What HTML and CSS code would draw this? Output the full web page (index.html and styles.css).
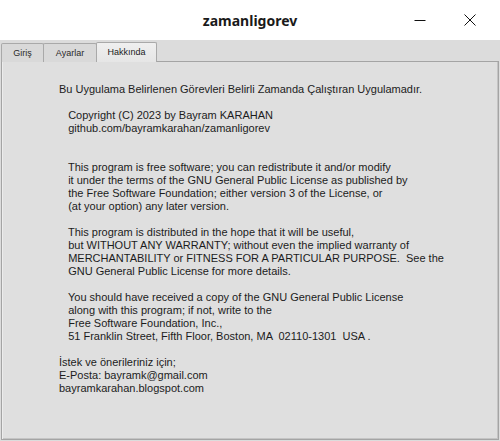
FILE: index.html
```html
<!DOCTYPE html>
<html>
<head>
<meta charset="utf-8">
<link rel="stylesheet" href="styles.css">
</head>
<body>
<div class="window">
  <div class="titlebar">
    <div class="title">zamanligorev</div>
    <div class="controls">
      <svg class="ctl" width="12" height="12" viewBox="0 0 12 12"><line x1="0.5" y1="6.5" x2="11.5" y2="6.5" stroke="#111" stroke-width="1"/></svg>
      <svg class="ctl close" width="12" height="12" viewBox="0 0 12 12"><path d="M0.5 0.5 L11.5 11.5 M11.5 0.5 L0.5 11.5" stroke="#111" stroke-width="1"/></svg>
    </div>
  </div>
  <div class="body">
    <div class="tabs">
      <div class="tab">Giriş</div>
      <div class="tab">Ayarlar</div>
      <div class="tab active">Hakkında</div>
      <div class="tabfill"></div>
    </div>
    <div class="panel">
<div class="text">Bu Uygulama Belirlenen Görevleri Belirli Zamanda Çalıştıran Uygulamadır.

   Copyright (C) 2023 by Bayram KARAHAN
   github.com/bayramkarahan/zamanligorev


   This program is free software; you can redistribute it and/or modify
   it under the terms of the GNU General Public License as published by
   the Free Software Foundation; either version 3 of the License, or
   (at your option) any later version.

   This program is distributed in the hope that it will be useful,
   but WITHOUT ANY WARRANTY; without even the implied warranty of
   MERCHANTABILITY or FITNESS FOR A PARTICULAR PURPOSE.  See the
   GNU General Public License for more details.

   You should have received a copy of the GNU General Public License
   along with this program; if not, write to the
   Free Software Foundation, Inc.,
   51 Franklin Street, Fifth Floor, Boston, MA  02110-1301  USA .

İstek ve önerileriniz için;
E-Posta: bayramk@gmail.com
bayramkarahan.blogspot.com</div>
    </div>
  </div>
</div>
</body>
</html>
```
FILE: styles.css
```css
html, body {
  margin: 0;
  padding: 0;
  background: #ffffff;
}
.window {
  width: 500px;
  height: 441px;
  display: flex;
  flex-direction: column;
  overflow: hidden;
}
.titlebar {
  height: 40px;
  flex: none;
  background: #ffffff;
  position: relative;
  display: flex;
  align-items: center;
  justify-content: center;
}
.title {
  font-family: "Noto Sans", sans-serif;
  font-weight: bold;
  font-size: 14px;
  color: #1a1a1a;
}
.controls {
  position: absolute;
  right: 24px;
  top: 14px;
  display: flex;
  gap: 38px;
}
.ctl {
  display: block;
}
.body {
  flex: 1;
  background: #dcdcdc;
  display: flex;
  flex-direction: column;
  padding: 1px;
}
.tabs {
  display: flex;
  align-items: flex-end;
  height: 21px;
  flex: none;
}
.tab {
  font-family: "Liberation Sans", Arial, sans-serif;
  font-size: 9px;
  color: #2a2a2a;
  height: 19px;
  line-height: 18px;
  padding: 0;
  background: #d9d9d9;
  border: 1px solid #a9a9a9;
  border-bottom: none;
  border-radius: 2px 2px 0 0;
  box-sizing: border-box;
  text-align: center;
  margin-right: -1px;
}
.tab:first-child { width: 43px; }
.tab:nth-child(2) { width: 54px; }
.tab.active {
  width: 61px;
  height: 20px;
  line-height: 18px;
  background: linear-gradient(#efefef, #e6e6e6);
  color: #1a1a1a;
  margin-right: 0;
}
.tabfill {
  flex: 1;
  border-bottom: 1px solid #a4a4a4;
}
.panel {
  flex: 1;
  background: #dfdfdf;
  border: 1px solid #a4a4a4;
  border-top: none;
  box-shadow: inset 1px 0 0 #ececec, inset -1px -1px 0 #c4c4c4;
  padding: 21px 0 0 57px;
}
.text {
  font-family: "Liberation Sans", Arial, sans-serif;
  font-size: 11px;
  line-height: 13px;
  color: #1c1c1c;
  white-space: pre;
}
```
